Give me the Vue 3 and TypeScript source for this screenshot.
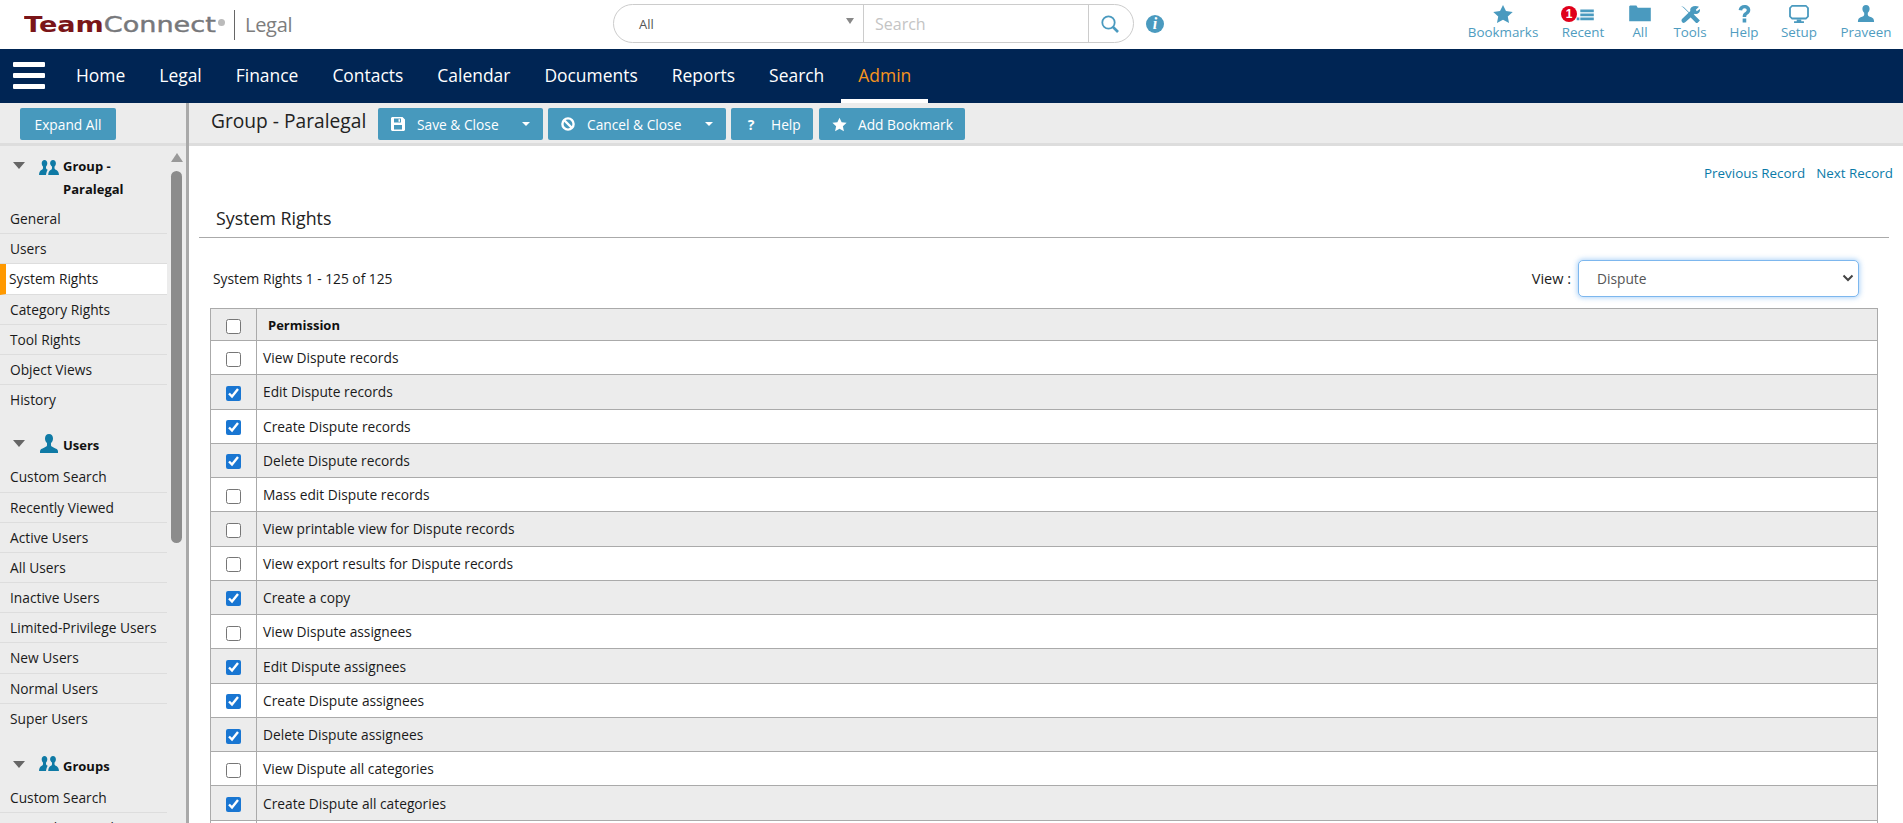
<template>
  <div class="page">
    <header class="top">
      <div class="logo">
        <div class="logo-word">
          <span class="logo-team">Team</span><span class="logo-connect">Connect</span>
        </div>
        <i class="logo-reg"></i>
        <i class="logo-line"></i>
        <span class="logo-legal">Legal</span>
      </div>
      <div class="search">
        <div class="search-scope">
          <span>All</span>
          <i class="scope-caret"></i>
        </div>
        <div class="search-input">Search</div>
        <div class="search-btn">
          <svg width="20" height="20" viewBox="0 0 20 20" fill="none" stroke="#4a9abf">
            <circle cx="8.5" cy="8.5" r="6.2" stroke-width="1.8" />
            <path d="M13 13l5 5" stroke-width="2.6" />
          </svg>
        </div>
      </div>
      <div class="info"><span>i</span></div>
      <nav class="tools">
        <a v-for="t in tools" :key="t.label" class="tool" :style="{ width: t.width + 'px' }">
          <span v-if="t.badge" class="badge">1</span>
          <svg width="22" height="18" viewBox="0 0 24 20" fill="#4a9abf">
            <path v-for="d in t.paths" :key="d" :d="d" />
          </svg>
          <span class="tool-label">{{ t.label }}</span>
        </a>
      </nav>
    </header>

    <div class="navbar">
      <div class="burger"><i></i><i></i><i></i></div>
      <a v-for="n in navItems" :key="n" class="nav-item" :class="{ active: n === 'Admin' }">{{ n }}</a>
    </div>

    <div class="body">
      <aside class="side">
        <div class="side-top"><button class="btn expand">Expand All</button></div>
        <div class="side-body">
          <div class="side-list">
            <section v-for="s in sections" :key="s.title" class="side-sec">
              <div class="sec-head" :class="{ two: s.title.includes('-') }">
                <i class="sec-caret"></i>
                <svg v-if="s.single" class="sec-icon" width="20" height="20" viewBox="0 0 20 20" fill="#0f7aa5">
                  <path d="M10 0c2.6 0 4 2 4 4.4 0 2-.9 3.6-2 4.6v2.3c0 1 1 1.500 3 2.500 2 .9 4 1.500 4 3.700v1.500H1v-1.500c0-2.200 2-2.800 4-3.700 2-1 3-1.500 3-2.500V9C6.900 8 6 6.400 6 4.400 6 2 7.400 0 10 0z" />
                </svg>
                <svg v-else class="sec-icon" width="20" height="16" viewBox="0 0 20 16" fill="#0f7aa5">
                  <path d="M5.500 1c1.700 0 2.800 1.300 2.800 3.200 0 1.300-.5 2.500-1.300 3.300v1.400c0 .8.8 1.200 1.700 1.800-.8 1.200-1.400 2.900-1.700 5.300H0c.2-2.700 1-4 2.300-4.900.9-.7 1.700-1.200 1.700-2.200V7.500C3.200 6.700 2.700 5.500 2.700 4.200 2.700 2.300 3.800 1 5.500 1z" />
                  <path d="M14 1c1.800 0 2.900 1.300 2.900 3.200 0 1.300-.5 2.500-1.400 3.300v1.400c0 1 .9 1.500 1.900 2.200 1.300.9 2.400 2.200 2.600 4.900H9.200c.2-2.700 1-4 2.300-4.900 1-.7 1.500-1.200 1.500-2.200V7.500c-.9-.8-1.900-2-1.900-3.300C11.100 2.300 12.200 1 14 1z" />
                </svg>
                <span class="sec-title">{{ s.title }}</span>
              </div>
              <a v-for="l in s.links" :key="l" class="side-link" :class="{ current: l === 'System Rights' }">{{ l }}</a>
            </section>
          </div>
          <div class="scroll">
            <i class="scroll-up"></i>
            <i class="scroll-thumb"></i>
          </div>
        </div>
      </aside>

      <main class="main">
        <div class="titlebar">
          <h1>Group - Paralegal</h1>
          <button class="btn act save">
            <svg width="14" height="14" viewBox="0 0 14 14" fill="#fff">
              <path fill-rule="evenodd" d="M1 0h10.500L14 2.500V13l-1 1H1l-1-1V1zM3 1.500v4h7v-4zM7.500 2.200h1.500v2.600H7.500zM3 8v4.500h8V8z" />
            </svg>
            <span class="act-label">Save &amp; Close</span>
            <i class="btn-caret"></i>
          </button>
          <button class="btn act cancel">
            <svg width="14" height="14" viewBox="0 0 14 14" fill="none" stroke="#fff" stroke-width="2.400">
              <circle cx="7" cy="7" r="5.600" />
              <path d="M3 3l8 8" />
            </svg>
            <span class="act-label">Cancel &amp; Close</span>
            <i class="btn-caret"></i>
          </button>
          <button class="btn act help"><b class="q">?</b><span class="act-label">Help</span></button>
          <button class="btn act bookmark">
            <svg width="15" height="15" viewBox="0 0 24 24" fill="#fff">
              <path d="M12 1l3.400 7.400 8 .9-6 5.400 1.700 8L12 18.700 4.900 22.700l1.700-8-6-5.400 8-.9z" />
            </svg>
            <span class="act-label">Add Bookmark</span>
          </button>
        </div>

        <div class="record-links">
          <a>Previous Record</a>
          <a>Next Record</a>
        </div>

        <h2 class="sec-h">System Rights</h2>

        <div class="list-head">
          <span>System Rights 1 - 125 of 125</span>
          <label class="view">
            <span>View :</span>
            <div class="view-select">
              Dispute
              <svg width="12" height="8" viewBox="0 0 12 8" fill="none" stroke="#444" stroke-width="2">
                <path d="M1.500 1.500L6 6l4.500-4.500" />
              </svg>
            </div>
          </label>
        </div>

        <div class="grid">
          <div class="row head">
            <div class="cell-check"><input type="checkbox" /></div>
            <div class="cell-name">Permission</div>
          </div>
          <div v-for="(r, i) in rights" :key="i" class="row">
            <div class="cell-check"><input v-if="r.name" type="checkbox" :checked="r.on" /></div>
            <div class="cell-name">{{ r.name }}</div>
          </div>
        </div>
      </main>
    </div>
  </div>
</template>

<script setup lang="ts">
interface Tool {
  label: string;
  width: number;
  paths: string[];
  badge?: boolean;
}

interface Section {
  title: string;
  single?: boolean;
  links: string[];
}

const navItems = ["Home", "Legal", "Finance", "Contacts", "Calendar", "Documents", "Reports", "Search", "Admin"];

const tools: Tool[] = [
  { label: "Bookmarks", width: 84, paths: ["M12 0l3.300 6.800 7.500.9-5.500 5.100 1.400 7.200L12 16.400 5.300 20l1.400-7.200L1.200 7.700l7.500-.9z"] },
  { label: "Recent", width: 76, badge: true, paths: ["M5 14h3v3H5zM9 5h15v3H9zM9 9.500h15v3H9zM9 14h15v3H9z"] },
  { label: "All", width: 38, paths: ["M0 3.500V1.500L1 .5h7L9.500 3H24v15H0zM0 5h24v13H0z"] },
  {
    label: "Tools",
    width: 62,
    paths: [
      "M2 1l3 1.200 9 9 2-1 7 7-3.500 3.500-7-7 1-2-9-9z",
      "M22 2l-3.500 3.200 1 1.800 3.500-2.500c.3 1.800-.2 3.400-1.500 4.500-1.200 1-2.800 1.200-4.200.6L7 19c-1 1.100-2.600 1.200-3.700.1s-1-2.700.1-3.700l9-8.800c-.5-1.600-.1-3.100 1.200-4.200C15.800.9 19 .7 22 2z"
    ]
  },
  { label: "Help", width: 46, paths: ["M6 5.500C6.600 2 9.300 0 12.500 0 16.300 0 19 2.300 19 5.500c0 2.500-1.400 3.800-3 5-1.200.8-1.500 1.300-1.500 2.800h-4c0-2.700.7-3.800 2.300-5 1.400-1 2.200-1.700 2.200-2.800 0-1.100-.9-1.900-2.300-1.900-1.500 0-2.400 1-2.700 2.500zM10.500 15h4v4.500h-4z"] },
  { label: "Setup", width: 64, paths: ["M4 0h16l3 3v10l-3 3H4l-3-3V3zM4.500 2L3 3.500v9L4.500 14h15l1.500-1.500v-9L19.500 2zM9.500 16.500h5v1.500h3v2H6.500v-2h3z"] },
  { label: "Praveen", width: 70, paths: ["M12 0c2.500 0 4 1.800 4 4.200 0 2-.8 3.500-2 4.500v2c0 1.200 1.600 1.900 4 3 2 1 3 2 3 5.300H3c0-3.300 1-4.300 3-5.300 2.400-1.100 4-1.800 4-3v-2c-1.200-1-2-2.500-2-4.500C8 1.800 9.500 0 12 0z"] }
];

const sections: Section[] = [
  {
    title: "Group - Paralegal",
    links: ["General", "Users", "System Rights", "Category Rights", "Tool Rights", "Object Views", "History"]
  },
  {
    title: "Users",
    single: true,
    links: ["Custom Search", "Recently Viewed", "Active Users", "All Users", "Inactive Users", "Limited-Privilege Users", "New Users", "Normal Users", "Super Users"]
  },
  { title: "Groups", links: ["Custom Search", "Recently Viewed"] }
];

const rights = [
  { name: "View Dispute records", on: false },
  { name: "Edit Dispute records", on: true },
  { name: "Create Dispute records", on: true },
  { name: "Delete Dispute records", on: true },
  { name: "Mass edit Dispute records", on: false },
  { name: "View printable view for Dispute records", on: false },
  { name: "View export results for Dispute records", on: false },
  { name: "Create a copy", on: true },
  { name: "View Dispute assignees", on: false },
  { name: "Edit Dispute assignees", on: true },
  { name: "Create Dispute assignees", on: true },
  { name: "Delete Dispute assignees", on: true },
  { name: "View Dispute all categories", on: false },
  { name: "Create Dispute all categories", on: true },
  { name: "", on: false }
];
</script>

<style>
html, body { margin: 0; overflow: hidden; }
</style>

<style scoped>
.page { height: 823px; overflow: hidden; display: flex; flex-direction: column; font-family: "Open Sans", "Noto Sans", sans-serif; font-size: 13.75px; color: #1a1a1a; background: #fff; }

.top { height: 49px; flex: none; display: flex; align-items: center; position: relative; }
.logo { width: 613px; flex: none; display: flex; align-items: center; padding-left: 24px; box-sizing: border-box; color: #6d6e71; }
.logo-word { width: 193px; flex: none; white-space: nowrap; font-family: "DejaVu Sans", sans-serif; font-size: 21px; line-height: 30px; transform: scaleX(1.29); transform-origin: left center; }
.logo-team { font-weight: 700; color: #7a1518; }
.logo-connect { color: #77787b; -webkit-text-stroke: 0.4px #77787b; }
.logo-reg { width: 7px; height: 7px; flex: none; border-radius: 50%; background: #bbb; align-self: flex-start; margin: 9px 0 0 1px; }
.logo-line { width: 1px; height: 30px; flex: none; background: #666; margin: 0 10px 0 9px; }
.logo-legal { font-size: 20px; color: #7d7d7d; letter-spacing: -0.3px; }

.search { width: 521px; height: 39px; flex: none; margin-top: -2px; box-sizing: border-box; border: 1px solid #ccc; border-radius: 20px; display: flex; }
.search-scope { width: 250px; flex: none; box-sizing: border-box; border-right: 1px solid #ccc; padding: 0 9px 0 25px; display: flex; align-items: center; justify-content: space-between; font-size: 13px; color: #555; }
.scope-caret { width: 0; height: 0; border: 4px solid transparent; border-top: 6px solid #888; margin-bottom: 1px; }
.search-input { flex: 1; padding-left: 11px; line-height: 39px; font-size: 16px; color: #c4c4c4; }
.search-btn { width: 45px; flex: none; border-left: 1px solid #ccc; display: flex; align-items: center; justify-content: center; padding-right: 3px; box-sizing: border-box; }
.info { width: 18px; height: 18px; margin: -2px 0 0 12px; border-radius: 50%; background: #4a9abf; display: flex; align-items: center; justify-content: center; color: #fff; font: italic 700 16px "Liberation Serif", serif; }

.tools { margin-left: auto; margin-right: 2px; display: flex; align-self: flex-start; }
.tool { position: relative; height: 45px; display: flex; flex-direction: column; align-items: center; color: #4f9cc0; font-size: 13.4px; line-height: 17px; }
.tool svg { margin-top: 5px; flex: none; }
.tool-label { margin-top: 1px; white-space: nowrap; }
.badge { position: absolute; left: 16px; top: 6px; width: 16px; height: 16px; border-radius: 50%; background: #e0001b; color: #fff; font: 700 12px/16px "Liberation Sans", sans-serif; text-align: center; }

.navbar { height: 54px; flex: none; background: #002554; display: flex; align-items: stretch; padding-left: 59px; position: relative; }
.burger { position: absolute; left: 13px; top: 13px; width: 32px; display: flex; flex-direction: column; gap: 6px; }
.burger i { display: block; height: 5px; border-radius: 1px; background: #fff; }
.nav-item { padding: 0 17px; line-height: 52px; color: #fff; font-size: 17.45px; box-sizing: border-box; }
.nav-item.active { color: #f7941d; border-bottom: 4px solid #fff; }

.body { flex: 1; display: flex; min-height: 0; }
.side { width: 189px; flex: none; box-sizing: border-box; background: #ececec; border-right: 3px solid #a9a9a9; display: flex; flex-direction: column; }
.side-top { height: 43px; flex: none; box-sizing: border-box; border-bottom: 3px solid #ddd; padding: 5px 0 0 20px; }
.btn { border: 0; border-radius: 2px; background: #4799bd; color: #fff; font-family: inherit; font-size: 13.75px; padding: 0; cursor: pointer; }
.expand { width: 96px; height: 32px; }
.side-body { flex: 1; display: flex; min-height: 0; }
.side-list { width: 167px; flex: none; }
.side-sec { margin-bottom: 11px; }
.side-sec:nth-child(2) { margin-bottom: 13px; }
.sec-head { display: flex; align-items: flex-start; height: 36px; padding-top: 8px; position: relative; padding-left: 39px; font-size: 13px; font-weight: 700; line-height: 23px; color: #111; box-sizing: border-box; }
.sec-head.two { height: 58px; padding-top: 9px; padding-left: 63px; }
.sec-caret { position: absolute; left: 13px; top: 14px; width: 0; height: 0; border: 6px solid transparent; border-top: 7px solid #666; border-bottom: 0; }
.sec-icon { position: absolute; left: 39px; top: 8px; }
.two .sec-caret { top: 16px; }
.two .sec-icon { top: 13px; }
.sec-title { margin-left: 24px; }
.two .sec-title { margin-left: 0; }
.side-link { display: block; height: 30.2px; line-height: 29px; padding-left: 10px; border-bottom: 1px solid #ddd; box-sizing: border-box; white-space: nowrap; }
.side-link:last-child { border-bottom: 0; }
.side-link.current { background: #fff; border-left: 6px solid #f90; padding-left: 3px; }
.scroll { width: 19px; flex: none; display: flex; flex-direction: column; align-items: center; }
.scroll-up { width: 0; height: 0; margin-top: 7px; border: 6px solid transparent; border-top: 0; border-bottom: 9px solid #999; }
.scroll-thumb { width: 11px; height: 372px; margin-top: 9px; border-radius: 6px; background: #8c8c8c; }

.main { flex: 1; min-width: 0; }
.titlebar { height: 43px; box-sizing: border-box; background: #ececec; border-bottom: 3px solid #ddd; display: flex; align-items: flex-start; padding: 5px 0 0 22px; gap: 5px; }
h1 { margin: 0 6px 0 0; font-size: 19.2px; font-weight: 400; line-height: 26px; color: #222; white-space: nowrap; width: 156px; }
.act { height: 32px; display: flex; align-items: center; padding-left: 13px; box-sizing: border-box; }
.act-label { margin-left: 12px; white-space: nowrap; }
.save { width: 165px; }
.cancel { width: 178px; }
.help { width: 82px; margin-right: 1px; }
.help .act-label { margin-left: 13px; }
.bookmark { width: 146px; }
.bookmark .act-label { margin-left: 11px; }
.q { width: 14px; text-align: center; font-size: 14px; }
.btn-caret { margin-left: auto; margin-right: 13px; width: 0; height: 0; border: 4px solid transparent; border-top: 4px solid #fff; border-bottom: 0; }

.record-links { display: flex; justify-content: flex-end; gap: 11px; padding: 17px 10px 0 0; font-size: 13.4px; line-height: 20px; color: #0a7aa8; }
h2.sec-h { margin: 23px 14px 0 10px; padding: 0 0 7px 17px; font-size: 17.8px; font-weight: 400; line-height: 24px; color: #222; border-bottom: 1px solid #aaa; }
.list-head { display: flex; align-items: center; justify-content: space-between; margin: 21px 44px 0 24px; height: 38px; }
.view { display: flex; align-items: center; gap: 7px; }
.view > span { font-size: 14.5px; }
.view-select { width: 281px; height: 37px; box-sizing: border-box; border: 1px solid #7db7ee; border-radius: 5px; box-shadow: 0 0 5px 1px rgba(80, 160, 240, 0.45); padding: 0 4px 0 18px; display: flex; align-items: center; justify-content: space-between; color: #555; background: #fff; }
.grid { margin: 11px 25px 0 21px; border-top: 1px solid #aaa; border-left: 1px solid #aaa; border-right: 1px solid #aaa; }
.row { display: flex; height: 34.27px; box-sizing: border-box; border-bottom: 1px solid #aaa; }
.row:nth-child(odd) { background: #ececec; }
.row:nth-child(even) { background: #fff; }
.row.head { height: 32px; background: #ececec; font-size: 13px; font-weight: 700; color: #111; }
.row.head .cell-name { padding-left: 11px; }
.cell-check { width: 45px; flex: none; border-right: 1px solid #aaa; display: flex; align-items: center; justify-content: center; }
.cell-check input { width: 15px; height: 15px; margin: 3px 0 0; accent-color: #1976d2; }
.cell-name { padding-left: 6px; display: flex; align-items: center; }
</style>
